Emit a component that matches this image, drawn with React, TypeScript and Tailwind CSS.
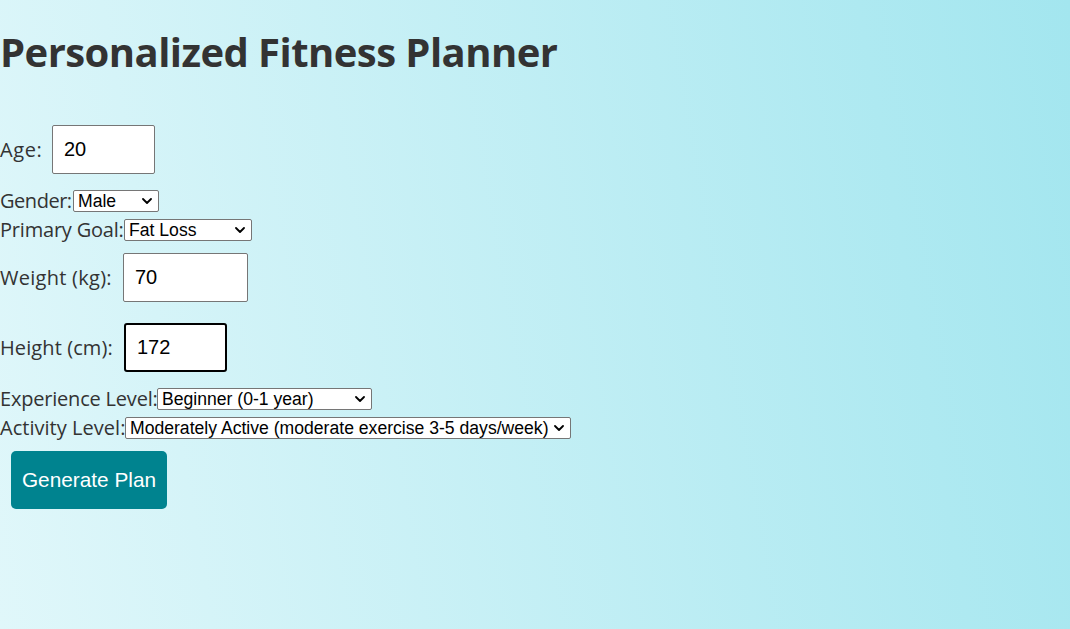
import React from "react";

function Chevron() {
  return (
    <svg
      className="pointer-events-none absolute right-[7px] top-1/2 -translate-y-1/2"
      width="10"
      height="6"
      viewBox="0 0 10 6"
      fill="none"
    >
      <path d="M1 1 L5 5 L9 1" stroke="#000" strokeWidth="1.8" strokeLinecap="round" strokeLinejoin="round" />
    </svg>
  );
}

function Select({ width, value }: { width: string; value: string }) {
  return (
    <span className={`relative inline-flex ${width} h-[22px]`}>
      <select className="appearance-none w-full h-[22px] bg-white border border-[#767676] rounded-[2px] text-[17.6px] leading-[20px] text-black font-['Liberation_Sans',Arial,sans-serif] tracking-normal pl-[4px] pr-[20px] outline-none">
        <option>{value}</option>
      </select>
      <Chevron />
    </span>
  );
}

const inputCls =
  "h-[49px] bg-white border border-[#767676] rounded-[2px] px-[11px] text-[20px] text-black font-['Liberation_Sans',Arial,sans-serif] tracking-normal outline-none";

export default function App() {
  return (
    <div className="w-[1070px] h-[629px] overflow-hidden bg-[linear-gradient(80deg,#e0f7fa,#a3e6ef)] text-[#333333] font-['Open_Sans',sans-serif]">
      <h1 className="mt-[28px] text-[40px] leading-[48px] font-bold tracking-[-0.55px] whitespace-nowrap">
        Personalized Fitness Planner
      </h1>

      <div className="flex flex-col text-[20px]">
        <div className="mt-[49px] h-[49px] flex items-center">
          <span className="w-[42px] shrink-0 whitespace-nowrap tracking-[0.6px]">Age:</span>
          <input type="text" defaultValue="20" className={`ml-[10px] w-[103px] ${inputCls}`} />
        </div>

        <div className="mt-[16px] h-[22px] flex items-center">
          <span className="w-[73px] shrink-0 whitespace-nowrap tracking-[-0.47px]">Gender:</span>
          <Select width="w-[86px]" value="Male" />
        </div>

        <div className="mt-[7px] h-[22px] flex items-center">
          <span className="w-[124px] shrink-0 whitespace-nowrap tracking-[-0.2px]">Primary Goal:</span>
          <Select width="w-[128px]" value="Fat Loss" />
        </div>

        <div className="mt-[12px] h-[49px] flex items-center">
          <span className="w-[113px] shrink-0 whitespace-nowrap tracking-[0.27px]">Weight (kg):</span>
          <input type="text" defaultValue="70" className={`ml-[10px] w-[125px] ${inputCls}`} />
        </div>

        <div className="mt-[21px] h-[49px] flex items-center">
          <span className="w-[114px] shrink-0 whitespace-nowrap tracking-[0.1px]">Height (cm):</span>
          <input
            type="text"
            defaultValue="172"
            className="ml-[10px] w-[103px] h-[49px] bg-white border-2 border-black rounded-[3px] px-[11px] text-[20px] text-black font-['Liberation_Sans',Arial,sans-serif] tracking-normal outline-none"
          />
        </div>

        <div className="mt-[16px] h-[22px] flex items-center">
          <span className="w-[157px] shrink-0 whitespace-nowrap tracking-[-0.2px]">Experience Level:</span>
          <Select width="w-[215px]" value="Beginner (0-1 year)" />
        </div>

        <div className="mt-[7px] h-[22px] flex items-center">
          <span className="w-[125px] shrink-0 whitespace-nowrap tracking-[0.03px]">Activity Level:</span>
          <Select width="w-[446px]" value="Moderately Active (moderate exercise 3-5 days/week)" />
        </div>

        <div className="mt-[12px] ml-[11px]">
          <button className="w-[156px] h-[58px] bg-[#00838f] text-white text-[20.8px] font-['Liberation_Sans',Arial,sans-serif] tracking-normal rounded-[5px]">
            Generate Plan
          </button>
        </div>
      </div>
    </div>
  );
}
